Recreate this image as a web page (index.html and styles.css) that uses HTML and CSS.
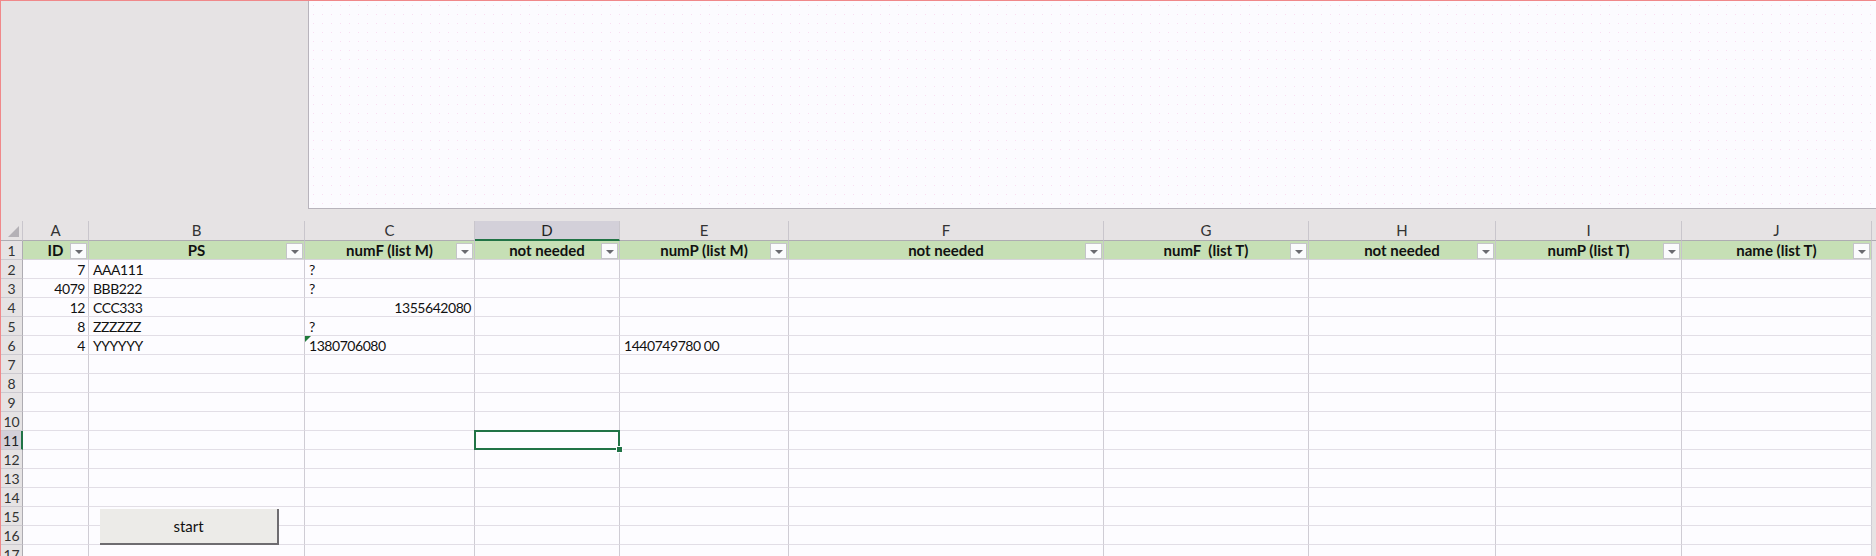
FILE: index.html
```html
<!DOCTYPE html>
<html>
<head>
<meta charset="utf-8">
<link rel="stylesheet" href="styles.css">
</head>
<body>
<div class="app">
  <div class="top">
    <div class="top-gray"></div>
    <div class="panel"></div>
  </div>
  <div class="sheet">
    <div class="grid">
      <div class="ch corner"><span class="tri"></span></div>
      <div class="ch">A</div><div class="ch">B</div><div class="ch">C</div><div class="ch sel">D</div><div class="ch">E</div><div class="ch">F</div><div class="ch">G</div><div class="ch">H</div><div class="ch">I</div><div class="ch last">J</div><div class="ch tail"></div>

      <div class="rh">1</div>
      <div class="hd">ID<span class="fb"></span></div>
      <div class="hd">PS<span class="fb"></span></div>
      <div class="hd">numF (list M)<span class="fb"></span></div>
      <div class="hd">not needed<span class="fb"></span></div>
      <div class="hd">numP (list M)<span class="fb"></span></div>
      <div class="hd">not needed<span class="fb"></span></div>
      <div class="hd">numF&nbsp; (list T)<span class="fb"></span></div>
      <div class="hd">not needed<span class="fb"></span></div>
      <div class="hd">numP (list T)<span class="fb"></span></div>
      <div class="hd">name (list T)<span class="fb"></span></div>
      <div class="tail"></div>

      <div class="rh">2</div>
      <div class="c r">7</div><div class="c">AAA111</div><div class="c">?</div><div class="c"></div><div class="c"></div><div class="c"></div><div class="c"></div><div class="c"></div><div class="c"></div><div class="c"></div><div class="tail"></div>

      <div class="rh">3</div>
      <div class="c r">4079</div><div class="c">BBB222</div><div class="c">?</div><div class="c"></div><div class="c"></div><div class="c"></div><div class="c"></div><div class="c"></div><div class="c"></div><div class="c"></div><div class="tail"></div>

      <div class="rh">4</div>
      <div class="c r">12</div><div class="c">CCC333</div><div class="c r">1355642080</div><div class="c"></div><div class="c"></div><div class="c"></div><div class="c"></div><div class="c"></div><div class="c"></div><div class="c"></div><div class="tail"></div>

      <div class="rh">5</div>
      <div class="c r">8</div><div class="c">ZZZZZZ</div><div class="c">?</div><div class="c"></div><div class="c"></div><div class="c"></div><div class="c"></div><div class="c"></div><div class="c"></div><div class="c"></div><div class="tail"></div>

      <div class="rh">6</div>
      <div class="c r">4</div><div class="c">YYYYYY</div><div class="c flag">1380706080</div><div class="c"></div><div class="c">1440749780 00</div><div class="c"></div><div class="c"></div><div class="c"></div><div class="c"></div><div class="c"></div><div class="tail"></div>

      <div class="rh">7</div><div class="c"></div><div class="c"></div><div class="c"></div><div class="c"></div><div class="c"></div><div class="c"></div><div class="c"></div><div class="c"></div><div class="c"></div><div class="c"></div><div class="tail"></div>
      <div class="rh">8</div><div class="c"></div><div class="c"></div><div class="c"></div><div class="c"></div><div class="c"></div><div class="c"></div><div class="c"></div><div class="c"></div><div class="c"></div><div class="c"></div><div class="tail"></div>
      <div class="rh">9</div><div class="c"></div><div class="c"></div><div class="c"></div><div class="c"></div><div class="c"></div><div class="c"></div><div class="c"></div><div class="c"></div><div class="c"></div><div class="c"></div><div class="tail"></div>
      <div class="rh">10</div><div class="c"></div><div class="c"></div><div class="c"></div><div class="c"></div><div class="c"></div><div class="c"></div><div class="c"></div><div class="c"></div><div class="c"></div><div class="c"></div><div class="tail"></div>
      <div class="rh rsel">11</div><div class="c"></div><div class="c"></div><div class="c"></div><div class="c active"></div><div class="c"></div><div class="c"></div><div class="c"></div><div class="c"></div><div class="c"></div><div class="c"></div><div class="tail"></div>
      <div class="rh">12</div><div class="c"></div><div class="c"></div><div class="c"></div><div class="c"></div><div class="c"></div><div class="c"></div><div class="c"></div><div class="c"></div><div class="c"></div><div class="c"></div><div class="tail"></div>
      <div class="rh">13</div><div class="c"></div><div class="c"></div><div class="c"></div><div class="c"></div><div class="c"></div><div class="c"></div><div class="c"></div><div class="c"></div><div class="c"></div><div class="c"></div><div class="tail"></div>
      <div class="rh">14</div><div class="c"></div><div class="c"></div><div class="c"></div><div class="c"></div><div class="c"></div><div class="c"></div><div class="c"></div><div class="c"></div><div class="c"></div><div class="c"></div><div class="tail"></div>
      <div class="rh">15</div><div class="c"></div><div class="c"></div><div class="c"></div><div class="c"></div><div class="c"></div><div class="c"></div><div class="c"></div><div class="c"></div><div class="c"></div><div class="c"></div><div class="tail"></div>
      <div class="rh">16</div><div class="c"></div><div class="c"></div><div class="c"></div><div class="c"></div><div class="c"></div><div class="c"></div><div class="c"></div><div class="c"></div><div class="c"></div><div class="c"></div><div class="tail"></div>
      <div class="rh">17</div><div class="c"></div><div class="c"></div><div class="c"></div><div class="c"></div><div class="c"></div><div class="c"></div><div class="c"></div><div class="c"></div><div class="c"></div><div class="c"></div><div class="tail"></div>
    </div>
    <button class="start">start</button>
  </div>
</div>
</body>
</html>
```
FILE: styles.css
```css
html, body {
  margin: 0;
  padding: 0;
  background: #e6e3e4;
  overflow: hidden;
}
.app {
  width: 1876px;
  height: 556px;
  box-sizing: border-box;
  border-top: 1px solid #f0888a;
  border-left: 1px solid #f0888a;
  background: #e6e3e4;
  font-family: Lato, "Open Sans", sans-serif;
  overflow: hidden;
}
.top {
  display: flex;
  height: 208px;
}
.top-gray {
  width: 307px;
  flex: none;
}
.panel {
  flex: 1;
  background-color: #fcfbff;
  background-image: radial-gradient(circle, #f9def2 0.7px, transparent 1px);
  background-size: 9px 9px;
  border-left: 1px solid #b8b4bc;
  border-bottom: 1px solid #b8b4bc;
}
.sheet {
  position: relative;
  margin-top: 12px;
}
.grid {
  display: grid;
  grid-template-columns: 22px 66px 216px 170px 145px 169px 315px 205px 187px 186px 190px 4px;
  grid-auto-rows: 19px;
  grid-template-rows: 20px;
}
.ch {
  box-sizing: border-box;
  border-right: 1px solid #c9c6cc;
  border-bottom: 1px solid #aeacb2;
  font-size: 15px;
  line-height: 19px;
  text-align: center;
  color: #333;
}
.ch.tail { border-right: none; }
.ch.sel {
  background: #d3d0d9;
  border-bottom: 2px solid #217346;
  color: #222;
}
.corner { position: relative; }
.tri {
  position: absolute;
  right: 3px;
  bottom: 3px;
  width: 0;
  height: 0;
  border-left: 11px solid transparent;
  border-bottom: 11px solid #b4b1b6;
}
.rh {
  box-sizing: border-box;
  border-right: 1px solid #aeacb2;
  border-bottom: 1px solid #ccc9cf;
  font-size: 14px;
  line-height: 19px;
  text-align: center;
  color: #333;
}
.rh.rsel {
  background: #d3d0d9;
  border-right: 2px solid #217346;
  color: #222;
}
.hd {
  position: relative;
  box-sizing: border-box;
  background: #c6dfb5;
  border-right: 1px solid #c6c3cb;
  border-bottom: 1px solid #d6d2da;
  font-weight: bold;
  font-size: 15px;
  line-height: 19px;
  text-align: center;
  color: #111;
}
.fb {
  position: absolute;
  right: 1px;
  top: 2px;
  width: 17px;
  height: 16px;
  box-sizing: border-box;
  background: #fbfbfd;
  border: 1px solid #c4c4c8;
}
.fb::after {
  content: "";
  position: absolute;
  left: 4px;
  top: 6px;
  border-left: 4px solid transparent;
  border-right: 4px solid transparent;
  border-top: 4px solid #6a6a70;
}
.c {
  position: relative;
  box-sizing: border-box;
  background: #fdfcff;
  border-right: 1px solid #cfccd4;
  border-bottom: 1px solid #e2dee6;
  font-size: 14px;
  letter-spacing: -0.45px;
  line-height: 19px;
  padding: 0 3px 0 4px;
  color: #111;
  white-space: nowrap;
}
.c.r { text-align: right; }
.tail { background: #e6e3e4; }
.flag::before {
  content: "";
  position: absolute;
  left: 0;
  top: 0;
  border-top: 6px solid #1f7a3a;
  border-right: 6px solid transparent;
}
.active { overflow: visible; }
.active::before {
  content: "";
  position: absolute;
  left: -1px;
  top: -1px;
  right: -1px;
  bottom: -1px;
  border: 2px solid #217346;
}
.active::after {
  content: "";
  position: absolute;
  right: -4px;
  bottom: -4px;
  width: 5px;
  height: 5px;
  background: #217346;
  border: 1px solid #fdfcff;
  z-index: 1;
}
.start {
  position: absolute;
  left: 99px;
  top: 288px;
  width: 179px;
  height: 36px;
  box-sizing: border-box;
  background: #ecebe8;
  border: none;
  border-right: 2px solid #6e6c70;
  border-bottom: 2px solid #6e6c70;
  font-family: Lato, "Open Sans", sans-serif;
  font-size: 15px;
  color: #111;
  padding: 0;
}
```
